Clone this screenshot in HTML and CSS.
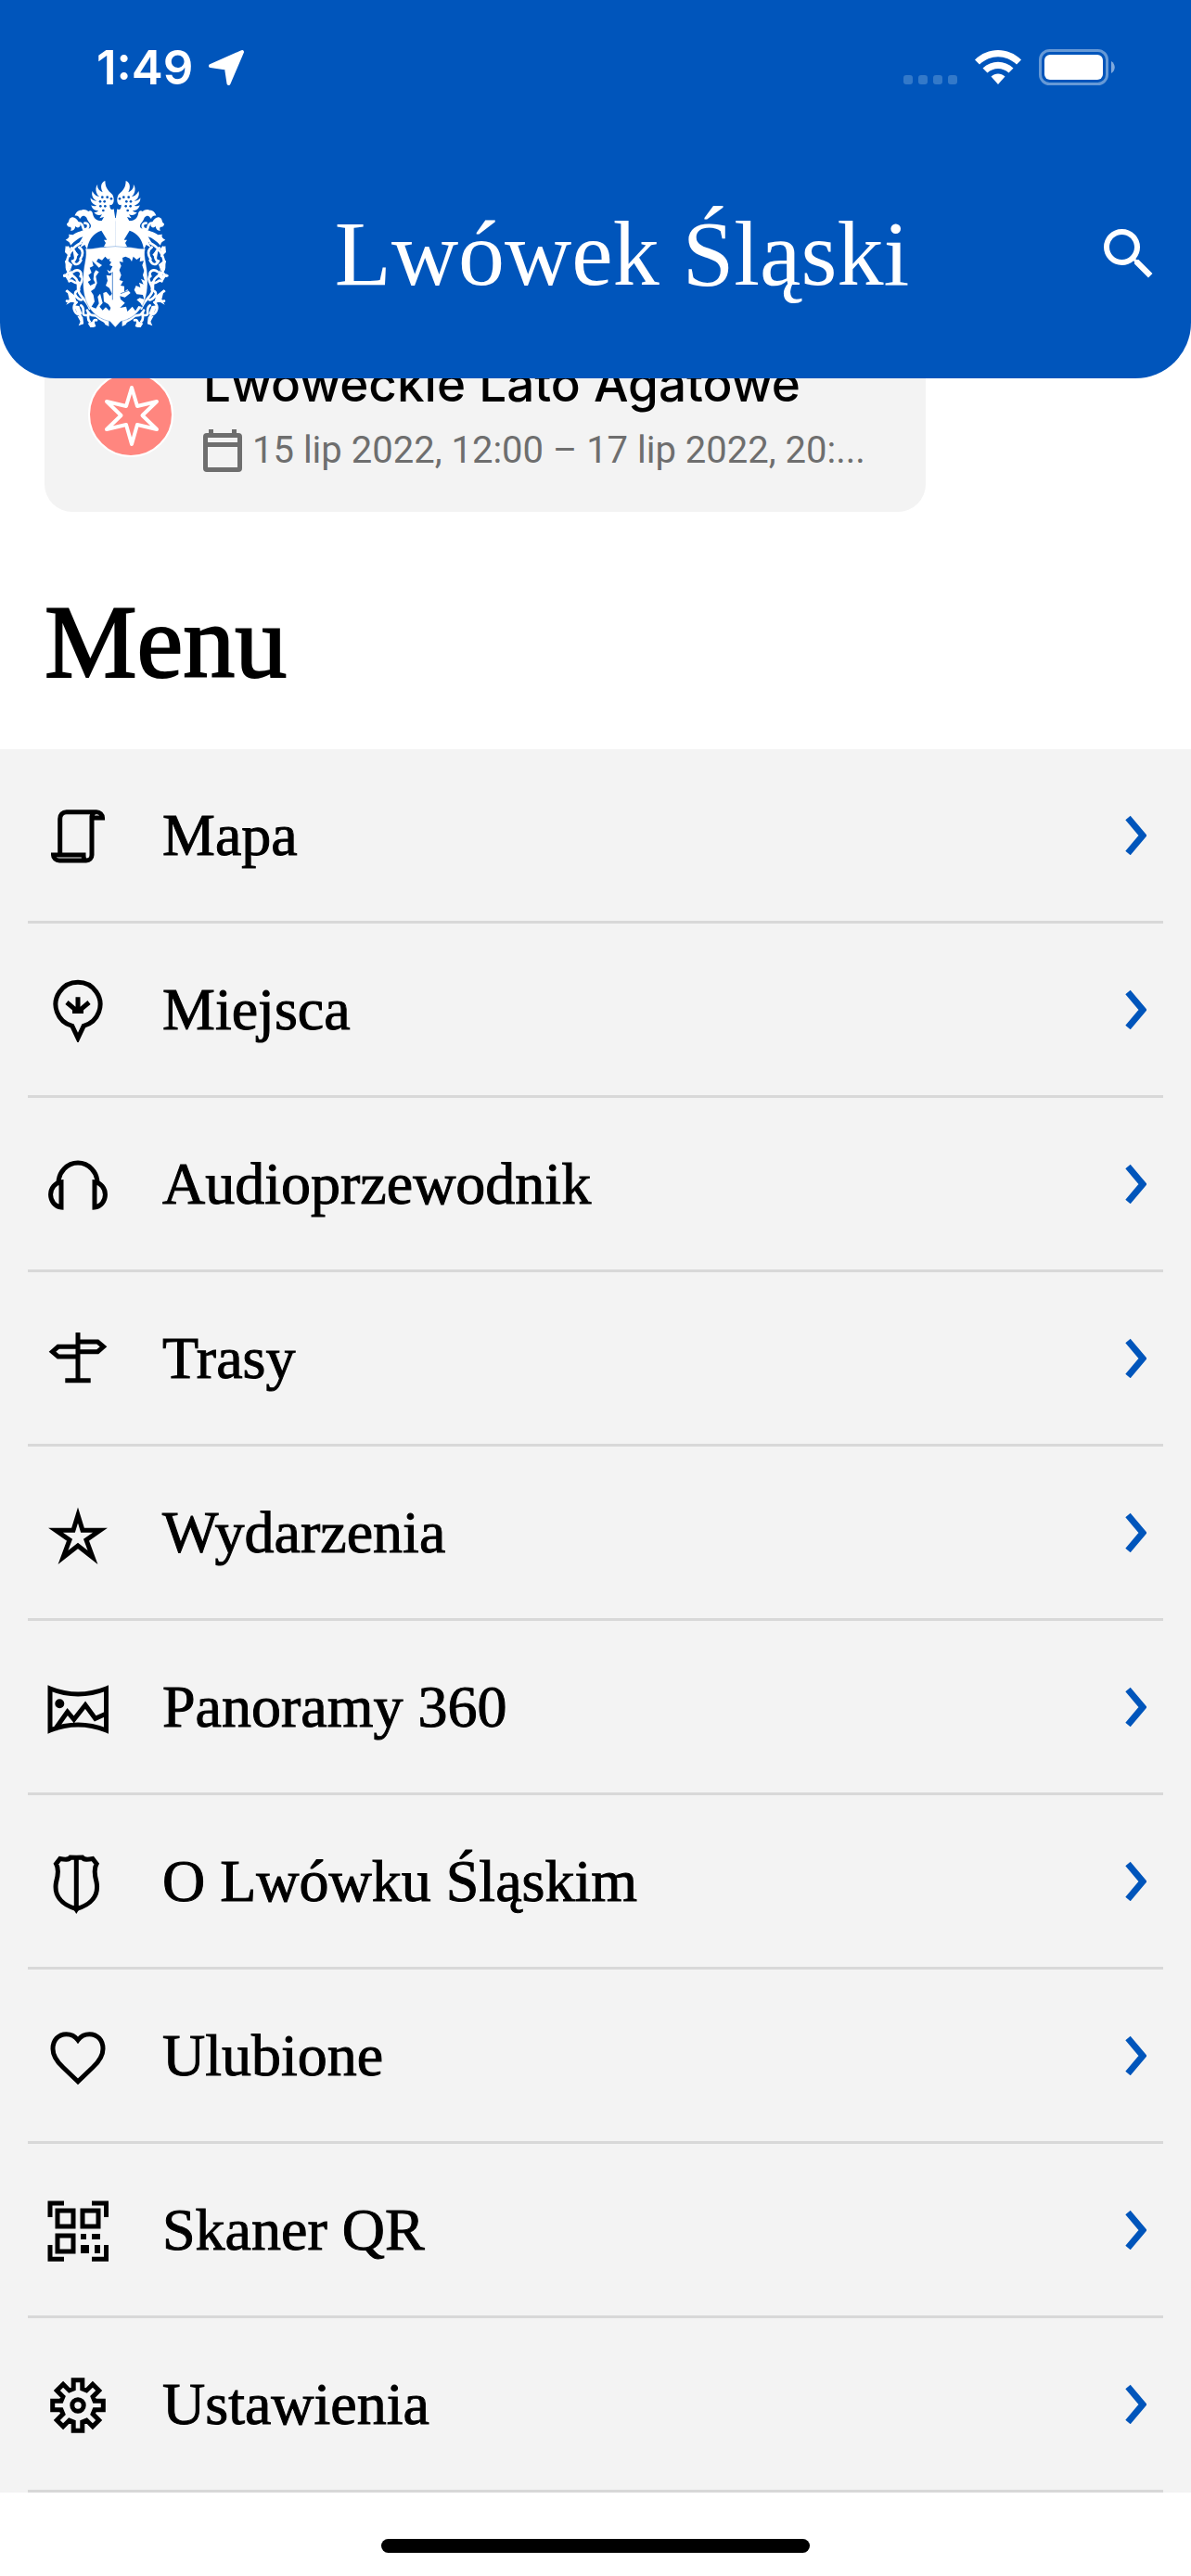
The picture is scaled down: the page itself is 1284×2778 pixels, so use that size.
FILE: index.html
```
<!DOCTYPE html>
<html lang="pl">
	<head>
		<meta charset="utf-8">
		<meta name="viewport" content="width=device-width">
		<title>Lwówek Śląski</title>
		<link rel="stylesheet" href="styles.css">
	</head>
	<body>
		<header class="header">
			<div class="status">
				<span class="time">1:49</span>
				<svg width="40" height="40" viewBox="0 0 40 40"><path d="M37 3L22.500 37L20 20.500L3 18Z" fill="#fff" stroke="#fff" stroke-width="4" stroke-linejoin="round"/></svg>
				<svg class="signal" width="58" height="40" viewBox="0 0 58 40" fill="#3379c9">
					<rect x="0" y="28" width="10" height="10" rx="3"/>
					<rect x="16" y="28" width="10" height="10" rx="3"/>
					<rect x="32" y="28" width="10" height="10" rx="3"/>
					<rect x="48" y="28" width="10" height="10" rx="3"/>
				</svg>
				<svg class="wifi" width="52" height="40" viewBox="0 0 52 40" fill="#fff">
					<path d="M1 11.500C15-2.500 37-2.500 51 11.500L46 16.500C34 5.500 18 5.500 6 16.500Z"/>
					<path d="M9.500 20.500C19 11.500 33 11.500 42.500 20.500L37.500 25.500C31 19.500 21 19.500 14.500 25.500Z"/>
					<path d="M18.500 29.500C23 25.500 29 25.500 33.500 29.500L26 38Z"/>
				</svg>
				<svg class="battery" width="82" height="40" viewBox="0 0 82 40">
					<rect x="1.500" y="1.500" width="72" height="36" rx="10" fill="none" stroke="#6699d6" stroke-width="3"/>
					<rect x="6" y="6" width="63" height="27" rx="6" fill="#fff"/>
					<path d="M78 13c5 3 5 10 0 13z" fill="#80aadd"/>
				</svg>
			</div>
			<div class="bar">
				<svg class="crest" width="114" height="158" viewBox="54 45 342 474">
					<defs>
						<g id="half">
							<path fill="#fff" d="M224 175L218 136C210 142 204 134 205 122C218 128 222 104 214 90C205 80 190 72 190 45C176 50 174 66 182 82C168 76 163 64 166 56C156 68 160 86 171 96C160 95 152 86 149 78C144 92 152 106 163 110C154 111 146 106 143 100C142 114 152 122 163 125C156 128 150 127 145 124C148 136 158 143 168 141C164 146 158 148 154 147C160 156 170 158 180 154L172 166L186 162L176 180L200 178Z"/>
							<g fill="#0055bb">
								<circle cx="174" cy="112" r="4"/><circle cx="181" cy="98" r="4"/><circle cx="188" cy="112" r="4"/>
								<circle cx="175" cy="127" r="4"/><circle cx="190" cy="127" r="4"/><circle cx="197" cy="98" r="4"/><circle cx="210" cy="103" r="4"/><circle cx="184" cy="141" r="4"/>
							</g>
							<!-- helmet and mantling -->
							<path fill="#fff" d="M224 165L190 172L160 182L142 198C120 204 96 212 86 220L72 218C76 226 72 232 62 236C72 240 78 246 78 254C92 240 104 230 118 226L106 246L118 242L108 262L124 252L132 268C134 246 146 216 178 206L196 236L186 236L192 246L186 258L204 264H224Z"/>
							<path fill="#fff" d="M66 184C76 178 70 168 80 164C90 160 98 168 104 178L110 190C104 200 98 196 94 192C92 204 84 208 78 206C82 200 80 196 78 194C72 196 66 192 66 184ZM92 158C94 148 102 140 112 140C120 136 130 138 136 144C142 138 150 144 150 152C154 168 164 176 184 174L176 196L140 200C152 186 134 180 130 164C118 152 114 162 108 168C106 160 100 156 92 158Z"/>
							<g fill="none" stroke="#fff" stroke-width="8" stroke-linecap="round">
								<path d="M104 182C124 180 114 208 126 202C140 198 138 180 124 182"/>
								<path d="M112 246C84 258 62 290 66 326C68 354 104 350 102 382C98 420 130 424 140 458"/>
								<path d="M70 260C62 270 72 276 74 288M82 262C94 274 100 290 90 304M84 304C92 320 104 318 112 302M106 260C122 270 118 286 110 298M64 306L74 332M86 340C102 326 118 340 110 354M56 352C68 358 66 330 82 350M74 370C86 360 88 382 104 374M112 350C126 370 100 380 106 398"/>
								<path d="M66 402C80 406 74 420 90 422M66 434C80 436 84 428 94 438M98 402C82 412 108 432 114 430M98 438C82 450 90 470 100 476M100 476C120 478 110 500 116 504M112 448C130 460 108 482 130 480M136 470C144 488 158 474 166 486M146 516C156 508 148 492 162 496M166 486C174 494 184 496 190 502M140 500C128 490 142 480 132 464"/>
							</g>
							<g fill="#fff">
								<path d="M62 256l18 8l-10 22l-10-10zM84 260l20 24l-14 12zM64 300l20 16l-6 18zM56 346l14 4l10-16l8 18l-18 18zM66 396l26 20l6 22l-20 0l-14 8l10-18zM88 448l18 2l10 26l-14 2zM100 482l18 4l2 22l-16 6l6-14zM134 506l20-8l6 18l-16 6zM182 488l20 8l0 20l-12-6z"/>
							</g>
						</g>
					</defs>
					<use href="#half"/>
					<use href="#half" transform="matrix(-1 0 0 1 447 0)"/>
					<path fill="#fff" stroke="#0055bb" stroke-width="1" d="M126 264C150 268 174 258 190 260Q223 254 256 260C276 258 298 268 320 264C312 288 328 320 327 366C329 440 298 488 240 500L223 519L206 500C148 488 116 440 119 366C118 320 134 288 126 264Z"/>
					<!-- lion -->
					<path fill="#0055bb" d="M190 290L199 299L206 296L203 303L210 308L204 318L214 322L206 338L196 332L202 344L212 342L208 352L194 350L198 368L192 384L204 392L212 410L206 418L194 404L184 408L186 436L200 444L208 456L204 466L192 454L182 464L172 452L182 440L174 410L166 420L170 442L160 458L146 452L156 436L152 414L144 402L156 394L164 376L160 354L170 340L160 334L154 344L152 364L158 376L142 384L134 372L144 366L136 350L146 342L140 326L152 320L148 304L160 316L170 326L180 318L162 306L168 296L180 302Z"/>
					<!-- eagle -->
					<path fill="#0055bb" d="M256 290L270 296L276 306L281 290L292 300L304 292L302 306L315 304L310 318L316 336L312 350L318 368L306 362L314 380L300 374L304 390L290 384L284 398L292 412L312 414L316 428L302 424L292 430L304 440L312 454L298 450L288 466L278 452L262 468L258 452L238 456L254 440L240 428L238 418L254 422L272 408L262 396L252 404L252 386L240 384L248 370L236 366L242 350L236 334L242 320L236 306L248 308L246 294Z"/>
					<path d="M214 340V430M240 410L266 400" stroke="#0055bb" stroke-width="2"/>
				</svg>
				<h1 class="title">Lwówek Śląski</h1>
				<button class="search" aria-label="Szukaj">
					<svg width="72" height="72" viewBox="0 0 24 24" fill="#fff"><path d="M15.500 14h-.79l-.28-.27A6.471 6.471 0 0 0 16 9.500 6.500 6.500 0 1 0 9.500 16c1.610 0 3.090-.59 4.230-1.570l.27.28v.79l5 4.990L20.490 19l-4.990-5zm-6 0C7.010 14 5 11.990 5 9.500S7.010 5 9.500 5 14 7.010 14 9.500 11.990 14 9.500 14z"/></svg>
				</button>
			</div>
		</header>
		<main>
			<article class="event">
				<svg class="event-icon" width="92" height="92" viewBox="0 0 92 92">
					<circle cx="46" cy="46" r="45" fill="#ff867f" stroke="#fff" stroke-width="2"/>
					<path d="M47 17L53 37L74 32L58.500 47L74 62L53 57L47 78L41 57L20 62L35.500 47L20 32L41 37Z" fill="none" stroke="#fff" stroke-width="4" stroke-linejoin="round"/>
				</svg>
				<div class="event-text">
					<h2 class="event-name">Lwóweckie Lato Agatowe</h2>
					<p class="event-date">
						<svg width="42" height="46" viewBox="0 0 42 46" fill="#6e6e6e"><path d="M6 0h5v4h20V0h5v4h2a4 4 0 0 1 4 4v34a4 4 0 0 1-4 4H4a4 4 0 0 1-4-4V8a4 4 0 0 1 4-4h2zM5 9v5h32V9zM5 19v22h32V19z" fill-rule="evenodd"/></svg>
						<span>15 lip 2022, 12:00 – 17 lip 2022, 20:...</span>
					</p>
				</div>
			</article>
			<h2 class="heading">Menu</h2>
			<nav>
				<ul class="menu">
					<li><a href="#mapa">
						<svg class="icon" viewBox="0 0 72 72"><path d="M16.700 58V19a7 7 0 0 1 7-7.300H56a6.500 6.500 0 0 1 6.500 6.300H51V58a6 6 0 0 1-6 6H16a6.500 6 0 0 1-6.500-6H42c0 4 1 6 4 6M51 18c0-3 1-6 4-6"/></svg>
						<span>Mapa</span>
						<svg class="arrow" viewBox="0 0 24 44"><path d="M4 4L20 23L4 42"/></svg>
					</a></li>
					<li><a href="#miejsca">
						<svg class="icon" viewBox="0 0 72 72"><path d="M29.800 54.400A24 24 0 1 1 42.200 54.400L36 67.500ZM36 23.300V40M24 29L35 38.300H37L48 29M30 38.500H42"/></svg>
						<span>Miejsca</span>
						<svg class="arrow" viewBox="0 0 24 44"><path d="M4 4L20 23L4 42"/></svg>
					</a></li>
					<li><a href="#audioprzewodnik">
						<svg class="icon" viewBox="0 0 72 72"><path d="M15 36A21 22 0 0 1 57 36M18 34.700A12.500 13.700 0 0 0 18 62ZM54 34.700A12.500 13.700 0 0 1 54 62Z"/></svg>
						<span>Audioprzewodnik</span>
						<svg class="arrow" viewBox="0 0 24 44"><path d="M4 4L20 23L4 42"/></svg>
					</a></li>
					<li><a href="#trasy">
						<svg class="icon" viewBox="0 0 72 72"><path d="M36 9V61M22.300 60.700H49.700M36 19H57.300L63.500 24.300L57.300 29.700H36M36 24.300H14.700L8.500 29.700L14.700 35H36"/></svg>
						<span>Trasy</span>
						<svg class="arrow" viewBox="0 0 24 44"><path d="M4 4L20 23L4 42"/></svg>
					</a></li>
					<li><a href="#wydarzenia">
						<svg class="icon" viewBox="0 0 72 72"><path d="M36 18L41 34.200H60L45 44.700L52 63.500L36 51L20 63.500L27 44.700L12 34.200H31Z"/></svg>
						<span>Wydarzenia</span>
						<svg class="arrow" viewBox="0 0 24 44"><path d="M4 4L20 23L4 42"/></svg>
					</a></li>
					<li><a href="#panoramy">
						<svg class="icon" viewBox="0 0 72 72"><path d="M6 17Q36 29 66.500 17V62Q36 50 6 62ZM11.300 61L24.700 42L31.700 50.300L44 34.700L54.700 49.300L66 44.300"/><circle cx="16.300" cy="33.300" r="2.500"/></svg>
						<span>Panoramy 360</span>
						<svg class="arrow" viewBox="0 0 24 44"><path d="M4 4L20 23L4 42"/></svg>
					</a></li>
					<li><a href="#o-lwowku">
						<svg class="icon" viewBox="0 0 72 72"><path d="M34.300 11.300L28 11C26 14 22 13.500 16.700 12.500L12.500 18C16 24 14.500 31 12.500 38C10 52 18 62 34.300 66.500C50.600 62 58.600 52 56.100 38C54.100 31 52.600 24 56.100 18L51.900 12.500C46.600 13.500 42.600 14 40.600 11ZM34.300 11V66"/><path class="solid" d="M30 65H38.600L34.300 72Z"/></svg>
						<span>O Lwówku Śląskim</span>
						<svg class="arrow" viewBox="0 0 24 44"><path d="M4 4L20 23L4 42"/></svg>
					</a></li>
					<li><a href="#ulubione">
						<svg class="icon" viewBox="0 0 72 72"><path d="M36 64.700L20 49.500C13 43 9 36.500 9 29.500C9 20 15 13.700 23.500 13.700C28.500 13.700 33 16 36 20C39 16 43.500 13.700 48.500 13.700C57 13.700 63 20 63 29.500C63 36.500 59 43 52 49.500Z"/></svg>
						<span>Ulubione</span>
						<svg class="arrow" viewBox="0 0 24 44"><path d="M4 4L20 23L4 42"/></svg>
					</a></li>
					<li><a href="#skaner">
						<svg class="icon" viewBox="0 0 72 72"><path d="M6 23V8H21M51 8H66.500V23M6 53V68.300H21M51 68.300H66.500V53M14 16H31V33H14ZM41 16H58V33H41ZM14 43H31V60H14Z"/><path class="solid" d="M39 41h6v6h-6zM51 41h9v6h-9zM39 53h9v9h-9zM54 53h6v9h-6z"/></svg>
						<span>Skaner QR</span>
						<svg class="arrow" viewBox="0 0 24 44"><path d="M4 4L20 23L4 42"/></svg>
					</a></li>
					<li><a href="#ustawienia">
						<svg class="icon" viewBox="0 0 72 72"><path d="M40.800 10.700V20L45.300 21.900L51.900 15.300L58.700 22.100L52.100 28.700L54 33.200H63.300V42.800H54L52.100 47.300L58.700 53.900L51.900 60.700L45.300 54.100L40.800 56V65.300H31.200V56L26.700 54.100L20.100 60.700L13.300 53.900L19.900 47.300L18 42.800H8.700V33.200H18L19.900 28.700L13.300 22.100L20.100 15.300L26.700 21.900L31.200 20V10.700Z"/><circle cx="36" cy="38" r="6.200"/></svg>
						<span>Ustawienia</span>
						<svg class="arrow" viewBox="0 0 24 44"><path d="M4 4L20 23L4 42"/></svg>
					</a></li>
				</ul>
			</nav>
		</main>
		<div class="home"></div>
	</body>
</html>
```

FILE: styles.css
```
* {
	box-sizing: border-box;
}

body {
	margin: 0;
	background-color: #fff;
	color: #000;
	font-family: "Liberation Serif", serif;
}

h1, h2, p, ul {
	margin: 0;
	padding: 0;
	font-weight: normal;
}

svg {
	display: block;
	flex: none;
}

.header {
	position: relative;
	z-index: 1;
	background-color: #0055bb;
	color: #fff;
	border-radius: 0 0 60px 60px;
	padding-top: 35px;
}

.status {
	display: flex;
	align-items: center;
	height: 76px;
	padding: 0 82px 0 104px;
}

.time {
	font: 600 51px/76px Inter, sans-serif;
	margin-right: 16px;
}

.signal {
	margin-left: auto;
}

.wifi {
	margin: 0 18px;
}

.bar {
	display: flex;
	align-items: center;
	padding: 84px 31px 55px 68px;
}

.title {
	flex: 1;
	font-size: 100px;
	line-height: 120px;
	text-align: center;
}

.search {
	display: flex;
	justify-content: flex-end;
	width: 94px;
	padding: 0;
	border: none;
	background: none;
	cursor: pointer;
}

/* the card is scrolled halfway under the header */
.event {
	display: flex;
	align-items: center;
	gap: 32px;
	width: 74%;
	margin: -80px 48px 0;
	padding: 56px 32px 42px 47px;
	background-color: #f3f3f3;
	border-radius: 30px;
	font-family: Inter, sans-serif;
	white-space: nowrap;
}

.event-name {
	font-size: 53px;
	font-weight: 500;
	line-height: 60px;
}

.event-date {
	display: flex;
	align-items: center;
	gap: 11px;
	margin-top: 18px;
	font-family: Roboto, sans-serif;
	font-size: 40px;
	line-height: 48px;
	color: #6e6e6e;
}

.heading {
	padding: 80px 48px 56px;
	font-size: 112px;
	line-height: 120px;
	-webkit-text-stroke: 2px #000;
}

.menu {
	list-style: none;
	padding: 0 30px;
	background-color: #f3f3f3;
}

.menu li {
	border-bottom: 3px solid #d8d8d8;
}

.menu a {
	display: flex;
	align-items: center;
	padding: 55px 18px 56px;
	color: #000;
	font-size: 64px;
	line-height: 72px;
	text-decoration: none;
}

.menu span {
	flex: 1;
	margin-left: 55px;
	padding-top: 2px;
	-webkit-text-stroke: 1px #000;
}

.icon {
	width: 72px;
	height: 72px;
	fill: none;
	stroke: #000;
	stroke-width: 5;
	stroke-miterlimit: 10;
}

.solid {
	fill: #000;
	stroke: none;
}

.arrow {
	width: 24px;
	height: 44px;
	fill: none;
	stroke: #0055bb;
	stroke-width: 7;
}

.home {
	width: 36%;
	height: 15px;
	margin: 50px auto 25px;
	border-radius: 8px;
	background-color: #000;
}
```
